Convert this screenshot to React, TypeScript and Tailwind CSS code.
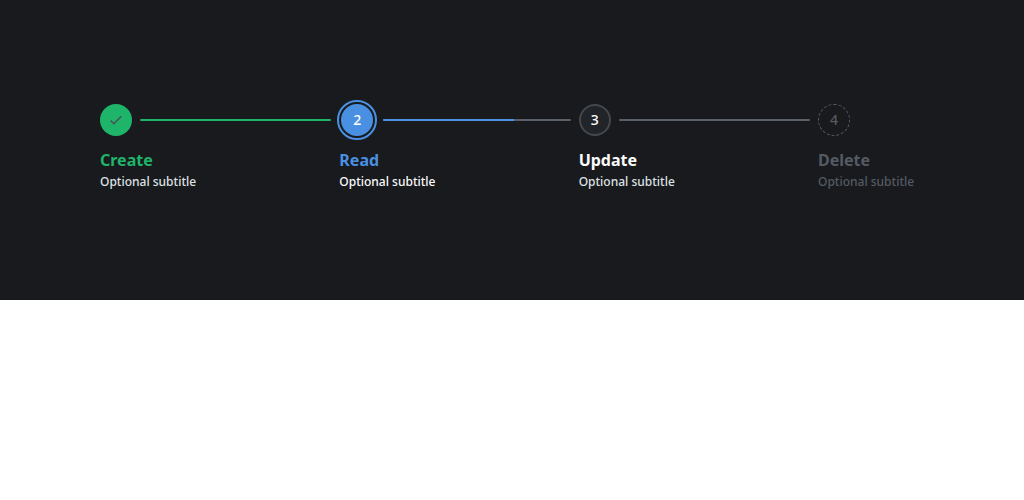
type Step = {
  id: number;
  title: string;
  status: "done" | "active" | "idle" | "disabled";
};

const steps: Step[] = [
  { id: 1, title: "Create", status: "done" },
  { id: 2, title: "Read", status: "active" },
  { id: 3, title: "Update", status: "idle" },
  { id: 4, title: "Delete", status: "disabled" },
];

const titleColor = {
  done: "text-[#1eb56b]",
  active: "text-[#4a90e2]",
  idle: "text-[#fbfbfc]",
  disabled: "text-[#545a64]",
};

const subtitleColor = {
  done: "text-[#dee2e6]",
  active: "text-[#fbfbfc]",
  idle: "text-[#dee2e6]",
  disabled: "text-[#545a64]",
};

const markerStyle = {
  done: "bg-[#1eb56b] text-[#495057]",
  active: "bg-[#4a90e2] text-white outline-2 outline-offset-2 outline-[#4a90e2]",
  idle: "border-2 border-[#43484e] bg-[#212529] text-[#fbfbfc]",
  disabled: "border border-dashed border-[#545a64] text-[#545a64]",
};

function Check() {
  return (
    <svg viewBox="0 0 16 16" className="size-4" fill="none" stroke="currentColor" strokeWidth="1.4" aria-hidden="true">
      <path d="M2.6 8.6 5.8 11.8 13.4 4.2" />
    </svg>
  );
}

function Connector({ status }: { status: Step["status"] }) {
  if (status === "active") {
    return (
      <span className="mr-2 ml-[10px] flex h-[2px] grow overflow-hidden rounded-full bg-[#5a6069]">
        <span className="w-[70%] bg-[#4a90e2]" />
      </span>
    );
  }
  return <span className={`mx-2 h-[2px] grow rounded-full ${status === "done" ? "bg-[#1eb56b]" : "bg-[#5a6069]"}`} />;
}

export default function App() {
  return (
    <main className="bg-[#191a1d] px-[100px] pt-[104px] pb-[109px] font-['Noto_Sans',sans-serif]">
      <ol className="flex">
        {steps.map((step, index) => {
          const last = index === steps.length - 1;
          return (
            <li key={step.id} className={last ? "w-[106px] shrink-0" : "min-w-0 flex-1"}>
              <div className="flex items-center">
                <span
                  className={`flex size-8 shrink-0 items-center justify-center rounded-full text-sm font-medium ${markerStyle[step.status]} ${step.status === "active" ? "ml-[2px]" : ""}`}
                >
                  {step.status === "done" ? <Check /> : step.id}
                </span>
                {!last && <Connector status={step.status} />}
              </div>
              <h2 className={`mt-3 text-base leading-6 font-bold ${titleColor[step.status]}`}>{step.title}</h2>
              <p className={`text-xs leading-[19px] font-medium whitespace-nowrap ${subtitleColor[step.status]}`}>
                Optional subtitle
              </p>
            </li>
          );
        })}
      </ol>
    </main>
  );
}
